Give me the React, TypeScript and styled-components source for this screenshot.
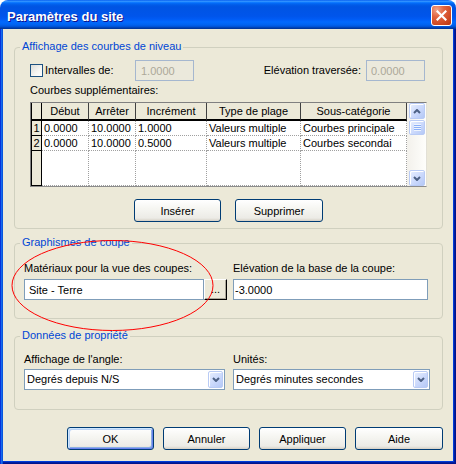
import React from "react";
import styled, { createGlobalStyle } from "styled-components";

const GlobalStyle = createGlobalStyle`
  * { box-sizing: border-box; }
  html, body { margin: 0; padding: 0; background: #ffffff; }
  body {
    font-family: "Liberation Sans", Arial, sans-serif;
    font-size: 11px;
    line-height: 13px;
    color: #000;
  }
`;

const FONT = `"Liberation Sans", Arial, sans-serif`;

const Window = styled.div`
  position: relative;
  width: 456px;
  height: 464px;
  display: flex;
  flex-direction: column;
`;

const TitleBar = styled.div`
  flex: none;
  height: 29px;
  display: flex;
  align-items: flex-start;
  padding: 0 4px 0 7px;
  border-radius: 8px 8px 0 0;
  background: linear-gradient(
    180deg,
    #0058ee 0%,
    #3593ff 4%,
    #288eff 6%,
    #127dff 8%,
    #036ffc 10%,
    #0262ee 14%,
    #0057e5 20%,
    #0054e3 24%,
    #0055eb 56%,
    #005bf5 66%,
    #026afe 76%,
    #0062ef 86%,
    #0052d6 92%,
    #0040ab 96%,
    #003092 100%
  );
`;

const TitleText = styled.div`
  flex: 1;
  padding-top: 9px;
  color: #fff;
  font-family: ${FONT};
  font-weight: bold;
  font-size: 13px;
  line-height: 15px;
  text-shadow: 1px 1px #0f1089;
`;

const CloseButton = styled.div`
  width: 21px;
  height: 21px;
  margin-top: 5px;
  border: 1px solid #fff;
  border-radius: 3px;
  background: radial-gradient(
    circle at 25% 20%,
    #f0a58b 0%,
    #e2643f 35%,
    #cf4a24 70%,
    #b8340f 100%
  );
  display: flex;
  align-items: center;
  justify-content: center;
`;

const Frame = styled.div`
  flex: 1;
  display: flex;
  padding: 0 3px 3px;
  background: #0055ea;
  box-shadow: inset 1px 0 #0831d9, inset 2px 0 #166aee, inset 3px 0 #0855dd,
    inset -1px -1px #00138c, inset -2px -2px #001ea0, inset -3px -3px #003bda;
`;

const Body = styled.div`
  flex: 1;
  background: #ece9d8;
  padding: 10px 10px 11px 11px;
  display: flex;
  flex-direction: column;
`;

const Group = styled.fieldset<{ $mt: number }>`
  margin: ${(p) => p.$mt}px 0 0;
  padding: 0;
  border: 1px solid #d0d0bf;
  border-radius: 4px;
  min-width: 0;
`;

const Legend = styled.legend`
  margin-left: 5px;
  padding: 0 2px 3px;
  line-height: 14px;
  color: #0046d5;
`;

const GroupContent = styled.div<{ $pad: string }>`
  padding: ${(p) => p.$pad};
  display: flex;
  flex-direction: column;
`;

const OptionRow = styled.div`
  display: flex;
  align-items: center;
  height: 21px;
`;

const CheckArea = styled.label`
  display: flex;
  align-items: center;
  gap: 2px;
  width: 105px;
`;

const Checkbox = styled.span`
  width: 13px;
  height: 13px;
  border: 1px solid #1c5180;
  background: linear-gradient(135deg, #dcdcd7 0%, #f6f6f3 60%, #ffffff 100%);
`;

const Spacer = styled.div`
  flex: 1;
`;

const InlineLabel = styled.span`
  margin-right: 5px;
`;

const TextInput = styled.input<{ $w?: number; $pl?: number; $mr?: number }>`
  width: ${(p) => (p.$w ? `${p.$w}px` : "100%")};
  height: 21px;
  margin: 0 ${(p) => p.$mr ?? 0}px 0 0;
  padding: 0 0 0 ${(p) => p.$pl ?? 2}px;
  border: 1px solid #7f9db9;
  background: #fff;
  font-family: ${FONT};
  font-size: 11px;
  color: #000;
  outline: none;
  min-width: 0;
  &:disabled {
    background: #ebe9dc;
    border-color: #a5b7cf;
    color: #aca899;
  }
`;

const SectionLabel = styled.div<{ $mt: number }>`
  margin-top: ${(p) => p.$mt}px;
  height: 13px;
`;

const GridFrame = styled.div`
  margin-top: 5px;
  height: 85px;
  display: flex;
  border-top: 1px solid #808080;
  border-left: 1px solid #808080;
  border-right: 1px solid #e2e0d6;
  border-bottom: 1px solid #8c8c8c;
  background: #fff;
`;

const Table = styled.div`
  display: grid;
  grid-template-columns: 11px 47px 47px 71px 94px 106px;
  grid-template-rows: 18px 15px 15px 35px;
`;

const Corner = styled.div`
  background: #ece9d8;
  border-left: 1px solid #000;
  border-right: 1px solid #000;
  border-bottom: 2px solid #000;
`;

const HeaderCell = styled.div`
  background: #ece9d8;
  border-right: 1px solid #404040;
  border-bottom: 2px solid #000;
  text-align: center;
  padding-top: 1px;
  line-height: 15px;
  white-space: nowrap;
  overflow: hidden;
`;

const RowHead = styled.div`
  background: #ece9d8;
  border-left: 1px solid #000;
  border-right: 1px solid #000;
  border-bottom: 1px solid #000;
  text-align: center;
  line-height: 14px;
`;

const Cell = styled.div`
  background: #fff;
  border-right: 1px dotted #a0a0a0;
  border-bottom: 1px dotted #a0a0a0;
  padding-left: 2px;
  line-height: 14px;
  white-space: nowrap;
  overflow: hidden;
`;

const ScrollBar = styled.div`
  width: 19px;
  padding: 0 1px 0 2px;
  display: flex;
  flex-direction: column;
  background: linear-gradient(90deg, #f3f1ec 0%, #fefefb 100%);
`;

const ScrollButton = styled.div<{ $h: number; $mt?: number }>`
  height: ${(p) => p.$h}px;
  margin-top: ${(p) => p.$mt ?? 0}px;
  border: 1px solid #b9cbf5;
  border-radius: 2px;
  background: linear-gradient(135deg, #e8effe 0%, #cbd9fc 55%, #b4c8f6 100%);
  box-shadow: inset 1px 1px 0 #ffffff;
  display: flex;
  align-items: center;
  justify-content: center;
`;

const Grip = styled.div`
  width: 7px;
  height: 7px;
  background: repeating-linear-gradient(
    180deg,
    #eef4fe 0 1px,
    #8cb0f8 1px 2px
  );
`;

const ButtonRow = styled.div<{ $mt: number; $justify: string; $gap: number }>`
  margin-top: ${(p) => p.$mt}px;
  display: flex;
  justify-content: ${(p) => p.$justify};
  gap: ${(p) => p.$gap}px;
`;

const XpButton = styled.button<{ $w: number; $default?: boolean }>`
  width: ${(p) => p.$w}px;
  height: 23px;
  padding: 0;
  border: 1px solid #003c74;
  border-radius: 3px;
  background: linear-gradient(
    180deg,
    #ffffff 0%,
    #f6f6f2 40%,
    #ecebe6 86%,
    #d6d0c5 100%
  );
  font-family: ${FONT};
  font-size: 11px;
  color: #000;
  box-shadow: ${(p) =>
    p.$default
      ? "inset 1px 1px 0 #cee7ff, inset -1px -1px 0 #6982ee, inset 2px 2px 0 #bcd4f6, inset -2px -2px 0 #89ade4"
      : "none"};
`;

const FieldGrid = styled.div<{ $cols: string; $gap: number }>`
  display: grid;
  grid-template-columns: ${(p) => p.$cols};
  column-gap: ${(p) => p.$gap}px;
`;

const FieldCol = styled.div<{ $gap: number }>`
  display: flex;
  flex-direction: column;
  gap: ${(p) => p.$gap}px;
  min-width: 0;
`;

const FieldLabel = styled.div`
  height: 13px;
  white-space: nowrap;
`;

const InputWithButton = styled.div`
  display: flex;
`;

const BrowseButton = styled.div`
  width: 23px;
  height: 21px;
  flex: none;
  background: #ece9d8;
  border-top: 1px solid #fff;
  border-left: 1px solid #fff;
  border-right: 1px solid #000;
  border-bottom: 1px solid #000;
  box-shadow: inset -1px -1px 0 #aca899;
  text-align: center;
  line-height: 13px;
  padding-top: 3px;
`;

const Select = styled.div`
  height: 21px;
  border: 1px solid #7f9db9;
  background: #fff;
  display: flex;
  align-items: center;
  padding-left: 2px;
`;

const SelectText = styled.span`
  flex: 1;
  white-space: nowrap;
  overflow: hidden;
`;

const DropButton = styled.div`
  width: 15px;
  height: 17px;
  margin-right: 1px;
  border: 1px solid #b9cbf5;
  border-radius: 2px;
  background: linear-gradient(135deg, #e8effe 0%, #cbd9fc 55%, #b4c8f6 100%);
  box-shadow: inset 1px 1px 0 #ffffff;
  display: flex;
  align-items: center;
  justify-content: center;
`;

const Annotation = styled.svg`
  position: absolute;
  left: 0;
  top: 0;
  pointer-events: none;
`;

const Chevron = ({ up }: { up?: boolean }) => (
  <svg width="8" height="5" viewBox="0 0 8 5">
    <polyline
      points={up ? "1,4 4,1 7,4" : "1,1 4,4 7,1"}
      fill="none"
      stroke="#4d6185"
      strokeWidth="2"
    />
  </svg>
);

const columns = ["Début", "Arrêter", "Incrément", "Type de plage", "Sous-catégorie"];
const rows = [
  ["0.0000", "10.0000", "1.0000", "Valeurs multiple", "Courbes principale"],
  ["0.0000", "10.0000", "0.5000", "Valeurs multiple", "Courbes secondai"],
];

export default function App() {
  return (
    <>
      <GlobalStyle />
      <Window>
        <TitleBar>
          <TitleText>Paramètres du site</TitleText>
          <CloseButton>
            <svg width="11" height="11" viewBox="0 0 11 11">
              <path
                d="M1.5 1.5 L9.5 9.5 M9.5 1.5 L1.5 9.5"
                stroke="#fff"
                strokeWidth="2.2"
                strokeLinecap="square"
              />
            </svg>
          </CloseButton>
        </TitleBar>
        <Frame>
          <Body>
            <Group $mt={0}>
              <Legend>Affichage des courbes de niveau</Legend>
              <GroupContent $pad="4px 15px 6px 15px">
                <OptionRow>
                  <CheckArea>
                    <Checkbox />
                    <span>Intervalles de:</span>
                  </CheckArea>
                  <TextInput $w={59} $pl={5} disabled defaultValue="1.0000" />
                  <Spacer />
                  <InlineLabel>Elévation traversée:</InlineLabel>
                  <TextInput $w={59} $pl={4} $mr={2} disabled defaultValue="0.0000" />
                </OptionRow>
                <SectionLabel $mt={3}>Courbes supplémentaires:</SectionLabel>
                <GridFrame>
                  <Table>
                    <Corner />
                    {columns.map((c) => (
                      <HeaderCell key={c}>{c}</HeaderCell>
                    ))}
                    {rows.map((r, i) => (
                      <React.Fragment key={i}>
                        <RowHead>{i + 1}</RowHead>
                        {r.map((v, j) => (
                          <Cell key={j}>{v}</Cell>
                        ))}
                      </React.Fragment>
                    ))}
                    <RowHead />
                    {columns.map((c) => (
                      <Cell key={c} />
                    ))}
                  </Table>
                  <ScrollBar>
                    <ScrollButton $h={16}>
                      <Chevron up />
                    </ScrollButton>
                    <ScrollButton $h={15} $mt={1}>
                      <Grip />
                    </ScrollButton>
                    <Spacer />
                    <ScrollButton $h={16}>
                      <Chevron />
                    </ScrollButton>
                  </ScrollBar>
                </GridFrame>
                <ButtonRow $mt={12} $justify="center" $gap={14}>
                  <XpButton $w={87}>Insérer</XpButton>
                  <XpButton $w={88}>Supprimer</XpButton>
                </ButtonRow>
              </GroupContent>
            </Group>

            <Group $mt={6}>
              <Legend>Graphismes de coupe</Legend>
              <GroupContent $pad="10px 14px 18px 9px">
                <FieldGrid $cols="203px 1fr" $gap={6}>
                  <FieldCol $gap={4}>
                    <FieldLabel>Matériaux pour la vue des coupes:</FieldLabel>
                    <InputWithButton>
                      <TextInput $w={180} $pl={4} readOnly defaultValue="Site - Terre" />
                      <BrowseButton>...</BrowseButton>
                    </InputWithButton>
                  </FieldCol>
                  <FieldCol $gap={4}>
                    <FieldLabel>Elévation de la base de la coupe:</FieldLabel>
                    <TextInput $pl={1} readOnly defaultValue="-3.0000" />
                  </FieldCol>
                </FieldGrid>
              </GroupContent>
            </Group>

            <Group $mt={9}>
              <Legend>Données de propriété</Legend>
              <GroupContent $pad="8px 12px 19px 9px">
                <FieldGrid $cols="201px 1fr" $gap={8}>
                  <FieldCol $gap={3}>
                    <FieldLabel>Affichage de l'angle:</FieldLabel>
                    <Select>
                      <SelectText>Degrés depuis N/S</SelectText>
                      <DropButton>
                        <Chevron />
                      </DropButton>
                    </Select>
                  </FieldCol>
                  <FieldCol $gap={3}>
                    <FieldLabel>Unités:</FieldLabel>
                    <Select>
                      <SelectText>Degrés minutes secondes</SelectText>
                      <DropButton>
                        <Chevron />
                      </DropButton>
                    </Select>
                  </FieldCol>
                </FieldGrid>
              </GroupContent>
            </Group>

            <ButtonRow $mt={17} $justify="flex-end" $gap={9}>
              <XpButton $w={87} $default>
                OK
              </XpButton>
              <XpButton $w={87}>Annuler</XpButton>
              <XpButton $w={87}>Appliquer</XpButton>
              <XpButton $w={88}>Aide</XpButton>
            </ButtonRow>
          </Body>
        </Frame>
        <Annotation width="456" height="464" viewBox="0 0 456 464">
          <ellipse
            cx="112.5"
            cy="285.5"
            rx="100.5"
            ry="45"
            fill="none"
            stroke="#ff0000"
            strokeWidth="1"
          />
        </Annotation>
      </Window>
    </>
  );
}
